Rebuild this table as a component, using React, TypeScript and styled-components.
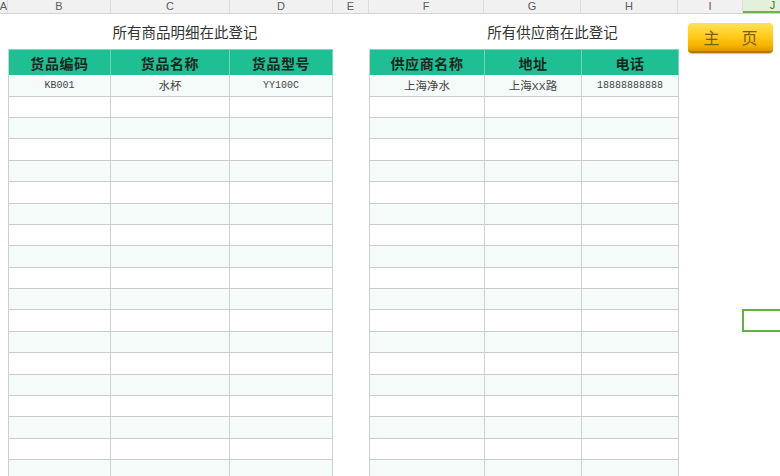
import React from "react";
import styled, { createGlobalStyle } from "styled-components";

const Global = createGlobalStyle`
  html, body { margin: 0; padding: 0; background: #ffffff; overflow: hidden; }
  #root { width: 780px; height: 476px; overflow: hidden; }
`;

const Sheet = styled.div`
  width: 780px;
  height: 476px;
  overflow: hidden;
  display: flex;
  flex-direction: column;
  background: #fff;
`;

const ColHeader = styled.div`
  display: flex;
  height: 14px;
  flex: none;
  background: #f1f1f1;
  border-bottom: 1px solid #d4d4d4;
  box-sizing: border-box;
`;

const ColCell = styled.div<{ $w: number; $active?: boolean }>`
  flex: none;
  width: ${(p) => p.$w}px;
  height: 100%;
  box-sizing: border-box;
  display: flex;
  align-items: center;
  justify-content: center;
  overflow: hidden;
  font-family: "Liberation Sans", Arial, sans-serif;
  font-size: 11px;
  line-height: 1;
  color: ${(p) => (p.$active ? "#2f7d22" : "#5a5a5a")};
  background: ${(p) => (p.$active ? "#e3f0dc" : "transparent")};
  border-right: 1px solid #dcdcdc;
  border-bottom: ${(p) => (p.$active ? "2px solid #6db34c" : "none")};
  margin-bottom: ${(p) => (p.$active ? "-1px" : "0")};
`;

const Body = styled.div`
  position: relative;
  flex: 1;
  display: flex;
  flex-direction: column;
  overflow: hidden;
`;

const TitleRow = styled.div`
  display: flex;
  height: 35px;
  flex: none;
  padding-left: 8px;
`;

const Title = styled.div<{ $w: number }>`
  flex: none;
  width: ${(p) => p.$w}px;
  box-sizing: border-box;
  padding-right: 7px;
  display: flex;
  align-items: center;
  justify-content: center;
  font-family: "Noto Sans CJK SC", sans-serif;
  font-size: 14.5px;
  color: #333;
`;

const TablesRow = styled.div`
  display: flex;
  align-items: flex-start;
  padding-left: 8px;
  gap: 36px;
`;

const Table = styled.div<{ $cols: string }>`
  display: grid;
  grid-template-columns: ${(p) => p.$cols};
  border-left: 1px solid #cfcfcf;
`;

const HeadCell = styled.div`
  height: 26.3px;
  box-sizing: border-box;
  background: #1fbf94;
  border-right: 1px solid #6fd6b8;
  border-top: 1px solid #7ad9bd;
  display: flex;
  align-items: center;
  justify-content: center;
  font-family: "Noto Sans CJK SC", sans-serif;
  font-weight: 700;
  font-size: 14px;
  letter-spacing: 0.6px;
  color: #17281f;
`;

const DataCell = styled.div<{ $tint: boolean; $latin?: boolean }>`
  height: 21.39px;
  box-sizing: border-box;
  background: ${(p) => (p.$tint ? "#f4fbf9" : "#ffffff")};
  border-right: 1px solid #d0d0d0;
  border-bottom: 1px solid #cbcbcb;
  display: flex;
  align-items: center;
  justify-content: center;
  font-family: "Liberation Mono", "Noto Sans CJK SC", monospace;
  font-size: ${(p) => (p.$latin ? "10px" : "11.5px")};
  color: #444;
`;

const HomeButton = styled.div`
  position: absolute;
  left: 688px;
  top: 9px;
  width: 85px;
  height: 30px;
  box-sizing: border-box;
  border-radius: 4px;
  background: linear-gradient(#ffe15a 0%, #ffcd1e 45%, #f6b300 80%, #df9800 100%);
  border-bottom: 2px solid #b07a00;
  box-shadow: 0 1px 1px rgba(120, 80, 0, 0.35);
  display: flex;
  align-items: center;
  justify-content: center;
  gap: 22px;
  font-family: "Noto Sans CJK SC", sans-serif;
  font-size: 16px;
  color: #7d5e08;
`;

const Selection = styled.div`
  position: absolute;
  left: 742px;
  top: 295px;
  width: 60px;
  height: 23px;
  box-sizing: border-box;
  border: 2px solid #64ae45;
`;

const columns = [
  { label: "A", w: 8 },
  { label: "B", w: 103 },
  { label: "C", w: 119 },
  { label: "D", w: 103 },
  { label: "E", w: 36 },
  { label: "F", w: 115 },
  { label: "G", w: 97 },
  { label: "H", w: 97 },
  { label: "I", w: 65 },
  { label: "J", w: 60, active: true },
];

type Row = { text: string; latin?: boolean }[];

const goodsHead = ["货品编码", "货品名称", "货品型号"];
const goodsRows: Row[] = [
  [{ text: "KB001", latin: true }, { text: "水杯" }, { text: "YY100C", latin: true }],
];
const supHead = ["供应商名称", "地址", "电话"];
const supRows: Row[] = [
  [{ text: "上海净水" }, { text: "上海XX路" }, { text: "18888888888", latin: true }],
];

const ROWS = 20;

function SheetTable({ cols, head, rows }: { cols: number[]; head: string[]; rows: Row[] }) {
  const all: Row[] = Array.from({ length: ROWS }, (_, i) => rows[i] ?? head.map(() => ({ text: "" })));
  return (
    <Table $cols={cols.map((c) => `${c}px`).join(" ")}>
      {head.map((h) => (
        <HeadCell key={h}>{h}</HeadCell>
      ))}
      {all.map((r, i) =>
        r.map((c, j) => (
          <DataCell key={`${i}-${j}`} $tint={i % 2 === 0} $latin={c.latin}>
            {c.text}
          </DataCell>
        ))
      )}
    </Table>
  );
}

export default function App() {
  return (
    <>
      <Global />
      <Sheet>
        <ColHeader>
          {columns.map((c) => (
            <ColCell key={c.label} $w={c.w} $active={c.active}>
              {c.label}
            </ColCell>
          ))}
        </ColHeader>
        <Body>
          <TitleRow>
            <Title $w={361}>所有商品明细在此登记</Title>
            <Title $w={374}>所有供应商在此登记</Title>
          </TitleRow>
          <TablesRow>
            <SheetTable cols={[102, 119, 103]} head={goodsHead} rows={goodsRows} />
            <SheetTable cols={[115, 97, 97]} head={supHead} rows={supRows} />
          </TablesRow>
          <HomeButton>
            <span>主</span>
            <span>页</span>
          </HomeButton>
          <Selection />
        </Body>
      </Sheet>
    </>
  );
}
